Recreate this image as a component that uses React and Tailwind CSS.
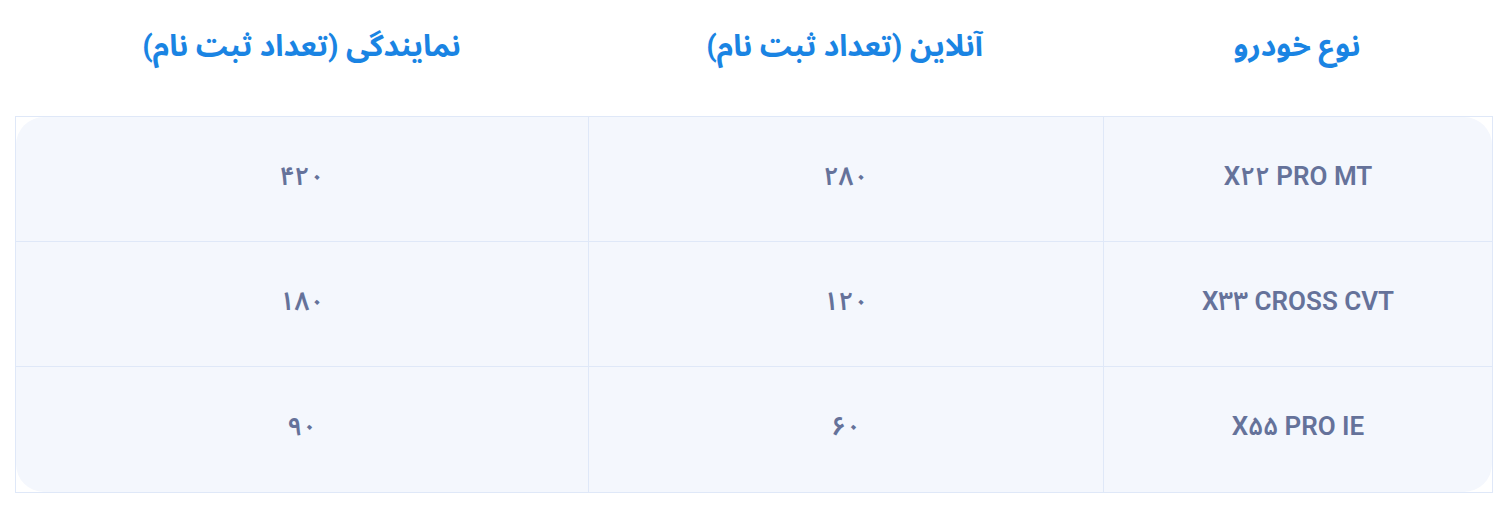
const ROWS = [
  { car: 'X۲۲ PRO MT', online: '۲۸۰', dealer: '۴۲۰' },
  { car: 'X۳۳ CROSS CVT', online: '۱۲۰', dealer: '۱۸۰' },
  { car: 'X۵۵ PRO IE', online: '۶۰', dealer: '۹۰' },
]

const HEAD = ['نوع خودرو', 'آنلاین (تعداد ثبت نام)', 'نمایندگی (تعداد ثبت نام)']

function Cell({ children, lastCol, lastRow, round }) {
  return (
    <div className={`h-[125px] ${lastCol ? '' : 'border-l border-[#dfe8f8]'} ${lastRow ? '' : 'border-b border-[#dfe8f8]'}`}>
      <div className={`h-full flex items-center justify-center pb-[6px] bg-[#f4f7fd] ${round}`}>
        {children}
      </div>
    </div>
  )
}

export default function App() {
  return (
    <div dir="rtl" className="bg-white min-h-screen font-['Roboto','Noto_Sans_Arabic','DejaVu_Sans',sans-serif]">
      <div className="mr-[17px] w-[1478px]">
        <div className="grid grid-cols-[390px_515px_1fr] h-[116px] px-px">
          {HEAD.map(h => (
            <div key={h} className="pt-[25px] text-center text-[30px] leading-[42px] font-bold text-[#1a84e3]">{h}</div>
          ))}
        </div>
        <div className="border border-[#dfe8f8] grid grid-cols-[389px_515px_1fr]">
          {ROWS.map((r, i) => {
            const last = i === ROWS.length - 1
            const first = i === 0
            return [
              <Cell key={i + 'a'} lastRow={last} round={first ? 'rounded-tr-[28px]' : last ? 'rounded-br-[28px]' : ''}>
                <span dir="ltr" className="text-[26px] font-semibold text-[#65729a]">{r.car}</span>
              </Cell>,
              <Cell key={i + 'b'} lastRow={last} round="">
                <span className="text-[26px] font-semibold text-[#65729a]">{r.online}</span>
              </Cell>,
              <Cell key={i + 'c'} lastRow={last} lastCol round={first ? 'rounded-tl-[28px]' : last ? 'rounded-bl-[28px]' : ''}>
                <span className="text-[26px] font-semibold text-[#65729a]">{r.dealer}</span>
              </Cell>,
            ]
          })}
        </div>
      </div>
    </div>
  )
}
